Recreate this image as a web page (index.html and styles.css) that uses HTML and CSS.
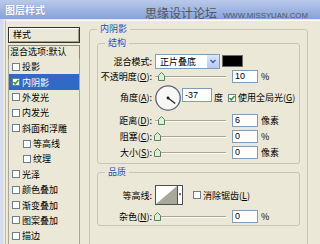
FILE: index.html
```html
<!DOCTYPE html>
<html lang="zh">
<head>
<meta charset="utf-8">
<title>图层样式</title>
<link rel="stylesheet" href="styles.css">
</head>
<body>
<div class="win">
  <div class="titlebar"><span class="title">图层样式</span></div>
  <div class="watermark"><span class="wm-cn">思缘设计论坛</span><span class="wm-en">WWW.MISSYUAN.COM</span></div>
  <div class="body">
    <div class="frame">
      <div class="side">
        <div class="side-head">样式</div>
        <div class="side-blend">混合选项:默认</div>
        <ul class="fx">
          <li><span class="cb"></span>投影</li>
          <li class="sel"><span class="cb"><svg viewBox="0 0 8 8" width="8" height="8"><polyline points="1.5,4 3.2,5.8 6.5,2" fill="none" stroke="#21a121" stroke-width="1.5"/></svg></span>内阴影</li>
          <li><span class="cb"></span>外发光</li>
          <li><span class="cb"></span>内发光</li>
          <li><span class="cb"></span>斜面和浮雕</li>
          <li class="sub"><span class="cb"></span>等高线</li>
          <li class="sub"><span class="cb"></span>纹理</li>
          <li><span class="cb"></span>光泽</li>
          <li><span class="cb"></span>颜色叠加</li>
          <li><span class="cb"></span>渐变叠加</li>
          <li><span class="cb"></span>图案叠加</li>
          <li><span class="cb"></span>描边</li>
        </ul>
      </div>
      <div class="main">
        <fieldset class="grp outer">
          <legend>内阴影</legend>
          <fieldset class="grp inner struct">
            <legend>结构</legend>
            <div class="row r-blend">
              <span class="lbl">混合模式:</span>
              <span class="select"><span class="sel-text">正片叠底</span><span class="arrow"><svg viewBox="0 0 12 13" width="12" height="13"><polyline points="3.5,5 6,7.5 8.5,5" fill="none" stroke="#4a5f8c" stroke-width="1.4"/></svg></span></span>
              <span class="swatch"></span>
            </div>
            <div class="row r-op">
              <span class="lbl">不透明度(<u>O</u>):</span>
              <span class="slider"><span class="thumb" style="left:3px"><svg viewBox="0 0 7 9" width="7" height="9"><path d="M0.5 3.5 L3.5 0.5 L6.5 3.5 V8.5 H0.5 Z" fill="#d9f1d3" stroke="#5f7d62"/></svg></span></span>
              <span class="num">10</span><span class="unit">%</span>
            </div>
            <div class="row r-angle">
              <span class="lbl">角度(<u>A</u>):</span>
              <svg class="dial" viewBox="0 0 26 26" width="26" height="26"><circle cx="13" cy="13" r="12.2" fill="#f7f7f5" stroke="#5a6278" stroke-width="1.3"/><line x1="13" y1="13" x2="20.2" y2="18.4" stroke="#1a1a1a" stroke-width="1.2"/><circle cx="13" cy="13" r="1.4" fill="#1a1a1a"/></svg>
              <span class="num wide">-37</span><span class="unit u-deg">度</span>
              <span class="cb"><svg viewBox="0 0 8 8" width="8" height="8"><polyline points="1.5,4 3.2,5.8 6.5,2" fill="none" stroke="#21a121" stroke-width="1.5"/></svg></span>
              <span class="cb-lbl">使用全局光(<u>G</u>)</span>
            </div>
            <div class="row r-s">
              <span class="lbl">距离(<u>D</u>):</span>
              <span class="slider"><span class="thumb" style="left:3px"><svg viewBox="0 0 7 9" width="7" height="9"><path d="M0.5 3.5 L3.5 0.5 L6.5 3.5 V8.5 H0.5 Z" fill="#d9f1d3" stroke="#5f7d62"/></svg></span></span>
              <span class="num">6</span><span class="unit">像素</span>
            </div>
            <div class="row r-s">
              <span class="lbl">阻塞(<u>C</u>):</span>
              <span class="slider"><span class="thumb" style="left:-1px"><svg viewBox="0 0 7 9" width="7" height="9"><path d="M0.5 3.5 L3.5 0.5 L6.5 3.5 V8.5 H0.5 Z" fill="#d9f1d3" stroke="#5f7d62"/></svg></span></span>
              <span class="num">0</span><span class="unit">%</span>
            </div>
            <div class="row r-s">
              <span class="lbl">大小(<u>S</u>):</span>
              <span class="slider"><span class="thumb" style="left:-1px"><svg viewBox="0 0 7 9" width="7" height="9"><path d="M0.5 3.5 L3.5 0.5 L6.5 3.5 V8.5 H0.5 Z" fill="#d9f1d3" stroke="#5f7d62"/></svg></span></span>
              <span class="num">0</span><span class="unit">像素</span>
            </div>
          </fieldset>
          <fieldset class="grp inner quality">
            <legend>品质</legend>
            <div class="row r-contour">
              <span class="lbl">等高线:</span>
              <span class="contour"><svg class="c-prev" viewBox="0 0 21 18" width="21" height="18"><polygon points="0,0 21,0 0,18" fill="#ffffff"/><polygon points="21,0 21,18 0,18" fill="#aaa89a"/></svg><span class="c-arrow"><svg viewBox="0 0 5 18" width="5" height="18"><polygon points="1,7 4,7 2.5,9.5" fill="#000"/></svg></span></span>
              <span class="cb aa"></span>
              <span class="cb-lbl">消除锯齿(<u>L</u>)</span>
            </div>
            <div class="row r-noise">
              <span class="lbl">杂色(<u>N</u>):</span>
              <span class="slider"><span class="thumb" style="left:-1px"><svg viewBox="0 0 7 9" width="7" height="9"><path d="M0.5 3.5 L3.5 0.5 L6.5 3.5 V8.5 H0.5 Z" fill="#d9f1d3" stroke="#5f7d62"/></svg></span></span>
              <span class="num">0</span><span class="unit">%</span>
            </div>
          </fieldset>
        </fieldset>
      </div>
    </div>
  </div>
</div>
</body>
</html>
```

FILE: styles.css
```css
* { box-sizing: border-box; margin: 0; padding: 0; }
html, body { width: 320px; height: 244px; overflow: hidden; }
body {
  background: #ebe8d7;
  font-family: "Noto Sans CJK SC", "Liberation Sans", sans-serif;
  font-size: 9px;
  color: #000;
}
u { text-decoration: underline; text-underline-offset: 1px; }

.win { position: relative; width: 320px; height: 244px; display: flex; flex-direction: column; }

.titlebar {
  height: 19px;
  flex: none;
  background: linear-gradient(#b9c9eb, #86a2da);
  padding-left: 5px;
  display: flex;
  align-items: center;
}
.title { color: #fff; font-weight: bold; font-size: 10px; line-height: 12px; text-shadow: 0 0 1px #5b78b8; }

.watermark {
  position: absolute;
  left: 145px;
  top: 5px;
  display: flex;
  align-items: baseline;
  color: #555;
  white-space: nowrap;
}
.wm-cn { font-size: 12px; line-height: 16px; font-family: "Noto Sans CJK SC", sans-serif; }
.wm-en { font-family: "Liberation Sans", sans-serif; font-size: 7.8px; margin-left: 6px; }

.body { flex: 1; display: flex; border-left: 3px solid #d5dcee; overflow: hidden; }
.frame {
  flex: 1;
  display: flex;
  align-items: flex-start;
  margin-top: 1px;
  margin-left: 2px;
  border-left: 1px solid #c2bfae;
  border-top: 1px solid #faf9f3;
  padding-left: 2px;
}

/* left list */
.side { width: 72px; margin-top: 6px; flex: none; }
.side-head {
  height: 16px;
  border: 1px solid #333;
  box-shadow: inset 1px 1px #fff, inset -1px -1px #9f9d8e;
  padding-left: 4px;
  line-height: 14px;
}
.side-blend {
  margin-top: 2px;
  height: 14px;
  border: 1px solid #8d8b7c;
  border-bottom: none;
  padding-left: 1px;
  line-height: 12px;
  white-space: nowrap;
}
.fx { list-style: none; border: 1px solid #a9a798; border-top: none; height: 200px; }
.fx li {
  height: 15.38px;
  display: flex;
  align-items: center;
  padding-left: 3px;
  white-space: nowrap;
}
.fx li.sub { padding-left: 14px; }
.fx li.sel { background: #3169c6; color: #fff; }

.cb {
  width: 8px;
  height: 8px;
  flex: none;
  border: 1px solid #6d7d93;
  background: #fff;
  margin-right: 2px;
  display: flex;
  align-items: center;
  justify-content: center;
}
.cb svg { display: block; flex: none; }

/* right panel */
.main { margin-left: 9px; margin-top: 3px; flex: none; }
.grp { border: 1px solid #c8c5b4; border-radius: 3px; }
.grp legend {
  font-size: 9px;
  line-height: 10px;
  color: #1f4fc4;
  padding: 0 3px;
}
.outer { width: 219px; padding: 4px 7px 60px 7px; }
.inner { width: 203px; }
.inner legend { margin-left: 7px; }
.struct { padding: 5px 0 3px 0; }
.quality { margin-top: 3px; padding: 8px 0 2px 0; }

.row { display: flex; align-items: center; white-space: nowrap; }
.lbl { width: 54px; text-align: right; margin-right: 3px; flex: none; }
.r-blend { height: 16px; }
.r-op { height: 14px; }
.r-angle { height: 29px; }
.r-s { height: 16px; }
.r-contour { height: 20px; }
.r-noise { height: 14px; margin-top: 4px; }

.select {
  width: 65px;
  height: 15px;
  border: 1px solid #7f9db9;
  background: #fff;
  display: flex;
  align-items: center;
  justify-content: space-between;
  padding-left: 4px;
  margin-right: 2px;
  flex: none;
}
.arrow {
  width: 12px;
  height: 13px;
  background: linear-gradient(#dbe5fc, #b7c9f4);
  border-radius: 1px;
  display: flex;
}
.swatch { width: 21px; height: 12px; background: #000; border: 1px solid #6a6a6a; flex: none; }

.slider { position: relative; width: 71px; height: 9px; margin-right: 6px; flex: none; }
.slider::before {
  content: "";
  position: absolute;
  left: 0;
  right: 0;
  top: 4px;
  height: 1px;
  background: #a9a798;
  box-shadow: 0 1px #fbfaf4;
}
.thumb { position: absolute; top: 0; width: 7px; height: 9px; }
.thumb svg { display: block; }

.num {
  width: 26px;
  height: 13px;
  border: 1px solid #7f9db9;
  background: #fff;
  padding-left: 2px;
  font-family: "Liberation Sans", sans-serif;
  font-size: 9px;
  line-height: 11px;
  margin-right: 3px;
  flex: none;
}
.num.wide { width: 30px; height: 14px; line-height: 12px; margin-right: 2px; align-self: flex-start; margin-top: 5px; }
.unit { font-size: 9px; }
.u-deg { margin-right: 5px; }
.dial { display: block; margin-right: 1px; flex: none; }
.cb-lbl { margin-left: 0; }

.contour {
  width: 28px;
  height: 20px;
  border: 1px solid #4f4f4f;
  display: flex;
  background: #fff;
  flex: none;
  margin-right: 10px;
}
.c-prev { display: block; flex: none; }
.c-arrow { width: 5px; border-left: 1px solid #4f4f4f; display: flex; flex: none; }
.cb.aa { margin-right: 2px; }
```
